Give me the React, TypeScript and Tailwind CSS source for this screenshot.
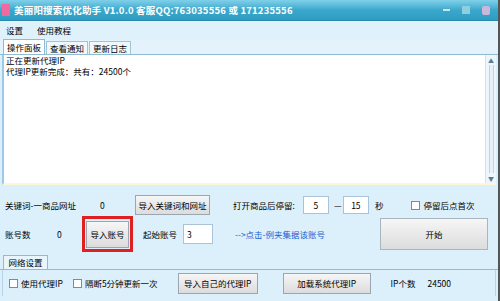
import React from "react";

const font = { fontFamily: '"Noto Sans CJK SC", "Liberation Sans", sans-serif' };

function Btn({ label, className }: { label: string; className: string }) {
  return (
    <div
      className={`flex items-center justify-center border border-[#9aa7b3] bg-gradient-to-b from-[#f6f6f6] to-[#dcdcdc] text-[8.5px] text-black ${className}`}>
      {label}
    </div>
  );
}

function Box({ value, className }: { value: string; className: string }) {
  return (
    <div className={`flex items-center border border-[#a9c3d8] bg-white px-[3px] text-[8.5px] ${className}`}>
      {value}
    </div>
  );
}

function Check({ label }: { label: string }) {
  return (
    <div className="flex items-center gap-[3px] text-[8.5px]">
      <span className="h-[9px] w-[9px] border border-[#6f8ea8] bg-white" />
      <span>{label}</span>
    </div>
  );
}

export default function App() {
  return (
    <div
      className="flex h-[301px] w-[500px] flex-col overflow-hidden border-r-2 border-[#555] bg-[#dcf0fb] text-black"
      style={font}>
      {/* 标题栏 */}
      <div className="flex h-[21px] items-center border-b border-[#2c87ac] bg-gradient-to-b from-[#7fd0ea] via-[#3aa8cd] to-[#2f9bc3] pl-[2px] pr-[8px]">
        <span className="mr-[4px] h-[12px] w-[8px] bg-[#f06aa0]" />
        <span className="text-[9.5px] font-bold tracking-[0.2px] text-white">
          美丽阳搜索优化助手 V1.0.0 客服QQ:763035556 或 171235556
        </span>
        <div className="ml-auto flex items-center gap-[12px]">
          <span className="h-[2px] w-[7px] bg-[#c8e6f2]" />
          <span className="h-[8px] w-[8px] bg-[#8fd0e0]" />
          <span className="h-[9px] w-[8px] rounded-[2px] bg-[#c9b8dc]" />
        </div>
      </div>

      {/* 菜单 */}
      <div className="flex h-[19px] items-center gap-[14px] bg-[#dff2fb] pl-[6px] text-[8.5px]">
        <span>设置</span>
        <span>使用教程</span>
      </div>

      {/* 标签 */}
      <div className="flex h-[15px] items-end border-b border-[#8fbcd3] bg-[#e4f3fb] pl-[3px]">
        <div className="flex h-[15px] w-[42px] items-center justify-center border border-b-0 border-[#8fbcd3] bg-white text-[8.5px]">
          操作面板
        </div>
        <div className="ml-[1px] flex h-[13px] w-[42px] items-center justify-center border border-b-0 border-[#9fc4d8] bg-[#eef8fd] text-[8.5px]">
          查看通知
        </div>
        <div className="ml-[1px] flex h-[13px] w-[42px] items-center justify-center border border-b-0 border-[#9fc4d8] bg-[#eef8fd] text-[8.5px]">
          更新日志
        </div>
      </div>

      {/* 日志区 */}
      <div className="mx-[2px] flex h-[130px] border-b-2 border-l-2 border-[#fdf6d8] border-l-[#9cc8ea] bg-white">
        <div className="flex-1 pl-[2px] text-[8.5px] leading-[11px]">
          <div>正在更新代理IP</div>
          <div>代理IP更新完成：共有：24500个</div>
        </div>
        <div className="flex w-[11px] flex-col border-l border-[#cfe3f0] bg-[#eef6fb]">
          <span className="flex h-[10px] items-center justify-center text-[6px] text-[#5a7d99]">▲</span>
          <span className="mx-auto w-[5px] flex-1 border-x border-[#b9d6ea] bg-[#e6f1f9]" />
          <span className="flex h-[10px] items-center justify-center text-[6px] text-[#5a7d99]">▼</span>
        </div>
      </div>

      {/* 行1 */}
      <div className="mt-[10px] flex h-[20px] items-center text-[8.5px]">
        <span className="ml-[5px] w-[95px]">关键词-一商品网址</span>
        <span className="w-[35px]">0</span>
        <Btn label="导入关键词和网址" className="h-[20px] w-[75px]" />
        <span className="ml-[23px]">打开商品后停留:</span>
        <Box value="5" className="ml-[8px] h-[18px] w-[26px] justify-center" />
        <span className="ml-[5px] w-[9px]">—</span>
        <Box value="15" className="h-[18px] w-[26px] justify-center" />
        <span className="ml-[6px]">秒</span>
        <div className="ml-[28px]">
          <Check label="停留后点首次" />
        </div>
      </div>

      {/* 行2 */}
      <div className="mt-[1px] flex h-[36px] items-center text-[8.5px]">
        <span className="ml-[5px] w-[52px]">账号数</span>
        <span className="w-[25px]">0</span>
        <div className="flex h-[36px] w-[51px] items-center justify-center border-[3px] border-[#e02020]">
          <Btn label="导入账号" className="h-[27px] w-[43px]" />
        </div>
        <span className="ml-[10px] w-[40px]">起始账号</span>
        <Box value="3" className="h-[20px] w-[30px]" />
        <span className="ml-[22px] text-[#1a5fd0]">--&gt;点击-例夹集据该账号</span>
        <Btn label="开始" className="ml-auto mr-[10px] h-[32px] w-[108px] border-[#a9b5bf]" />
      </div>

      {/* 网络设置 */}
      <div className="mt-[4px] flex h-[14px] items-end border-b border-[#8fbcd3] pl-[3px]">
        <div className="flex h-[14px] w-[45px] items-center justify-center border border-b-0 border-[#8fbcd3] bg-[#e8f5fc] text-[8.5px]">
          网络设置
        </div>
      </div>
      <div className="mx-[2px] flex h-[26px] items-center border-x border-[#b7d5e6] text-[8.5px]">
        <div className="ml-[6px]">
          <Check label="使用代理IP" />
        </div>
        <div className="ml-[10px]">
          <Check label="隔断5分钟更新一次" />
        </div>
        <Btn label="导入自己的代理IP" className="ml-[20px] h-[21px] w-[80px]" />
        <Btn label="加载系统代理IP" className="ml-[25px] h-[21px] w-[88px]" />
        <span className="ml-[20px]">IP个数</span>
        <span className="ml-[12px]">24500</span>
      </div>
    </div>
  );
}
